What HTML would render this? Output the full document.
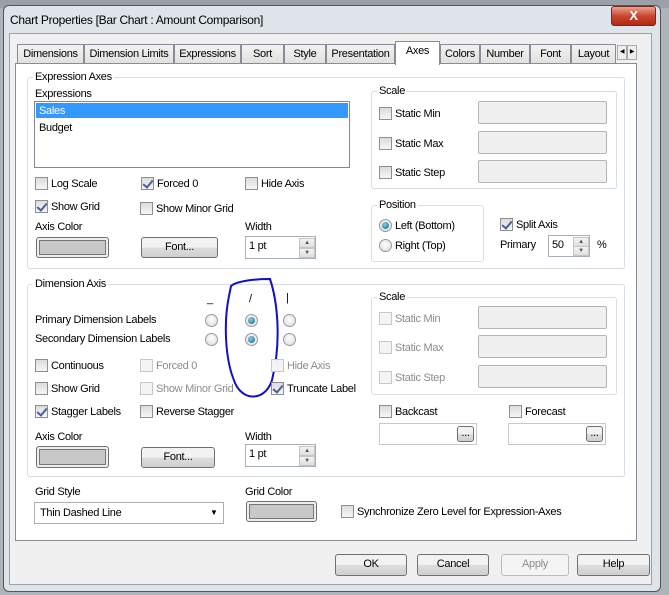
<!DOCTYPE html>
<html><head><meta charset="utf-8"><style>
*{box-sizing:border-box;margin:0;padding:0}
body{width:669px;height:595px;background:#aeb4ba;position:relative;overflow:hidden;font-family:"Liberation Sans",sans-serif;font-size:11px;letter-spacing:-0.3px;color:#000}
.a{position:absolute}
.t{position:absolute;white-space:nowrap;line-height:14px}
.cb{position:absolute;width:13px;height:13px;border:1px solid #8f8f8f;background:linear-gradient(#dcdcdc,#f6f6f6)}
.cb.on::after{content:"";position:absolute;left:3px;top:0px;width:4px;height:8px;border:solid #4a5f97;border-width:0 2px 2px 0;transform:rotate(40deg)}
.cb.dis{border-color:#c8c8c8;background:#f4f4f4}
.rb{position:absolute;width:13px;height:13px;border-radius:50%;border:1px solid #9a9a9a;background:radial-gradient(circle at 50% 40%,#fff,#d9d9d9)}
.rb.on::after{content:"";position:absolute;left:2px;top:2px;width:7px;height:7px;border-radius:50%;background:radial-gradient(circle at 40% 35%,#7fd0e8,#1b5e7e)}
.dis{color:#8d8d8d}
.grp{position:absolute;border:1px solid #d5dfe5;border-radius:3px}
.gl{position:absolute;background:#fff;padding:0 2px;line-height:14px;top:-8px;left:5px;white-space:nowrap}
.btn{position:absolute;border:1px solid #707070;border-radius:3px;background:linear-gradient(#f2f2f2 50%,#dddddd 51%,#cfcfcf);text-align:center;line-height:19px;white-space:nowrap}
.inp{position:absolute;border:1px solid #b5b5b5;background:#f0f0f0;border-radius:2px}
.color{position:absolute;border:1px solid #707070;border-radius:3px;padding:2px;background:#eee}
.color div{width:100%;height:100%;background:#c8c8c8;border:1px solid #777}
.spin{position:absolute;border:1px solid #abadb3;background:#fff}
.spin .s{position:absolute;right:0;width:16px;border:1px solid #c5c5c5;background:linear-gradient(#f4f4f4,#dedede);font-size:6px;text-align:center;color:#555;line-height:8px}
.tab{position:absolute;top:44px;height:20px;border:1px solid #898c95;border-bottom:none;background:linear-gradient(#f2f2f2,#e0e0e0);text-align:center;line-height:18px;white-space:nowrap;overflow:hidden}
</style></head><body>
<div class="a" style="left:0;top:0;width:669px;height:8px;background:#9aa0a8"></div>
<div class="a" style="left:3px;top:5px;width:658px;height:587px;border:1px solid #555;border-radius:6px;background:#dfe4ea"></div>
<div class="t" style="left:10px;top:13px;font-size:12px">Chart Properties [Bar Chart : Amount Comparison]</div>
<div class="a" style="left:611px;top:6px;width:45px;height:20px;border:1px solid #6d2a22;border-radius:3px;background:linear-gradient(#e9a394,#c8452f 50%,#b02a14);color:#fff;font-weight:bold;text-align:center;line-height:18px;font-size:13px">X</div>
<div class="a" style="left:9px;top:33px;width:643px;height:552px;background:#f0f0f0;border:1px solid #9aa3ad"></div>
<div class="tab" style="left:17px;width:67px">Dimensions</div>
<div class="tab" style="left:84px;width:90px">Dimension Limits</div>
<div class="tab" style="left:174px;width:67px">Expressions</div>
<div class="tab" style="left:241px;width:43px">Sort</div>
<div class="tab" style="left:284px;width:42px">Style</div>
<div class="tab" style="left:326px;width:69px">Presentation</div>
<div class="tab" style="left:440px;width:40px">Colors</div>
<div class="tab" style="left:480px;width:50px">Number</div>
<div class="tab" style="left:530px;width:41px">Font</div>
<div class="tab" style="left:571px;width:45px">Layout</div>
<div class="a" style="left:617px;top:45px;width:10px;height:15px;border:1px solid #aaa;background:#eee;font-size:6px;line-height:13px;text-align:center">◀</div>
<div class="a" style="left:627px;top:45px;width:10px;height:15px;border:1px solid #aaa;background:#eee;font-size:6px;line-height:13px;text-align:center">▶</div>
<div class="a" style="left:15px;top:63px;width:622px;height:478px;background:#fff;border:1px solid #898c95"></div>
<div class="tab" style="left:395px;top:41px;width:45px;height:24px;background:#fff;line-height:18px;z-index:2">Axes</div>

<div class="grp" style="left:27px;top:77px;width:598px;height:192px"><span class="gl">Expression Axes</span></div>
<div class="t" style="left:35px;top:87px">Expressions</div>
<div class="a" style="left:34px;top:101px;width:316px;height:67px;border:1px solid #828790;background:#fff"></div>
<div class="a" style="left:36px;top:103px;width:312px;height:15px;background:#3399ff"></div>
<div class="t" style="left:39px;top:104px;color:#fff">Sales</div>
<div class="t" style="left:39px;top:121px">Budget</div>
<div class="cb" style="left:35px;top:177px"></div><div class="t" style="left:51px;top:177px">Log Scale</div>
<div class="cb on" style="left:141px;top:177px"></div><div class="t" style="left:157px;top:177px">Forced 0</div>
<div class="cb" style="left:245px;top:177px"></div><div class="t" style="left:261px;top:177px">Hide Axis</div>
<div class="cb on" style="left:35px;top:200px"></div><div class="t" style="left:51px;top:200px">Show Grid</div>
<div class="cb" style="left:140px;top:202px"></div><div class="t" style="left:156px;top:202px">Show Minor Grid</div>
<div class="t" style="left:35px;top:220px">Axis Color</div>
<div class="color" style="left:36px;top:237px;width:73px;height:21px"><div></div></div>
<div class="btn" style="left:141px;top:237px;width:77px;height:21px">Font...</div>
<div class="t" style="left:245px;top:220px">Width</div>
<div class="spin" style="left:245px;top:236px;width:71px;height:23px"><span class="t" style="left:3px;top:2px">1 pt</span><div class="s" style="top:1px;height:10px">▲</div><div class="s" style="top:11px;height:10px">▼</div></div>

<div class="grp" style="left:371px;top:91px;width:246px;height:98px"><span class="gl">Scale</span></div>
<div class="cb" style="left:379px;top:107px"></div><div class="t" style="left:395px;top:107px">Static Min</div>
<div class="inp" style="left:478px;top:101px;width:129px;height:23px"></div>
<div class="cb" style="left:379px;top:137px"></div><div class="t" style="left:395px;top:137px">Static Max</div>
<div class="inp" style="left:478px;top:131px;width:129px;height:23px"></div>
<div class="cb" style="left:379px;top:166px"></div><div class="t" style="left:395px;top:166px">Static Step</div>
<div class="inp" style="left:478px;top:160px;width:129px;height:23px"></div>
<div class="grp" style="left:371px;top:205px;width:113px;height:57px"><span class="gl">Position</span></div>
<div class="rb on" style="left:379px;top:219px"></div><div class="t" style="left:395px;top:219px">Left (Bottom)</div>
<div class="rb" style="left:379px;top:239px"></div><div class="t" style="left:395px;top:239px">Right (Top)</div>
<div class="cb on" style="left:500px;top:218px"></div><div class="t" style="left:516px;top:218px">Split Axis</div>
<div class="t" style="left:500px;top:238px">Primary</div>
<div class="spin" style="left:548px;top:235px;width:42px;height:22px"><span class="t" style="left:3px;top:2px">50</span><div class="s" style="top:1px;height:10px">▲</div><div class="s" style="top:10px;height:10px">▼</div></div>
<div class="t" style="left:597px;top:238px">%</div>

<div class="grp" style="left:27px;top:284px;width:598px;height:193px"><span class="gl">Dimension Axis</span></div>
<div class="t" style="left:207px;top:292px">_</div>
<div class="t" style="left:249px;top:292px">/</div>
<div class="t" style="left:286px;top:291px">|</div>
<div class="t" style="left:35px;top:313px">Primary Dimension Labels</div>
<div class="t" style="left:35px;top:332px">Secondary Dimension Labels</div>
<div class="rb" style="left:205px;top:314px"></div><div class="rb on" style="left:245px;top:314px"></div><div class="rb" style="left:283px;top:314px"></div>
<div class="rb" style="left:205px;top:333px"></div><div class="rb on" style="left:245px;top:333px"></div><div class="rb" style="left:283px;top:333px"></div>
<svg class="a" style="left:0;top:0" width="669" height="595"><path d="M231 286 C 238 280,260 279,270 279 C 277 300,282 340,272 380 C 266 400,245 402,236 385 C 224 360,224 320,229 296 Z" fill="none" stroke="#1010c8" stroke-width="2"/></svg>
<div class="cb" style="left:35px;top:359px"></div><div class="t" style="left:51px;top:359px">Continuous</div>
<div class="cb dis" style="left:140px;top:359px"></div><div class="t dis" style="left:156px;top:359px">Forced 0</div>
<div class="cb dis" style="left:271px;top:359px"></div><div class="t dis" style="left:287px;top:359px">Hide Axis</div>
<div class="cb" style="left:35px;top:382px"></div><div class="t" style="left:51px;top:382px">Show Grid</div>
<div class="cb dis" style="left:140px;top:382px"></div><div class="t dis" style="left:156px;top:382px">Show Minor Grid</div>
<div class="cb on" style="left:271px;top:382px"></div><div class="t" style="left:287px;top:382px">Truncate Label</div>
<div class="cb on" style="left:35px;top:405px"></div><div class="t" style="left:51px;top:405px">Stagger Labels</div>
<div class="cb" style="left:140px;top:405px"></div><div class="t" style="left:156px;top:405px">Reverse Stagger</div>
<div class="t" style="left:35px;top:430px">Axis Color</div>
<div class="color" style="left:36px;top:446px;width:73px;height:22px"><div></div></div>
<div class="btn" style="left:141px;top:447px;width:74px;height:21px">Font...</div>
<div class="t" style="left:245px;top:430px">Width</div>
<div class="spin" style="left:245px;top:444px;width:71px;height:23px"><span class="t" style="left:3px;top:2px">1 pt</span><div class="s" style="top:1px;height:10px">▲</div><div class="s" style="top:11px;height:10px">▼</div></div>

<div class="grp" style="left:371px;top:297px;width:246px;height:98px"><span class="gl">Scale</span></div>
<div class="cb dis" style="left:379px;top:312px"></div><div class="t dis" style="left:395px;top:312px">Static Min</div>
<div class="inp" style="left:478px;top:306px;width:129px;height:23px"></div>
<div class="cb dis" style="left:379px;top:341px"></div><div class="t dis" style="left:395px;top:341px">Static Max</div>
<div class="inp" style="left:478px;top:335px;width:129px;height:23px"></div>
<div class="cb dis" style="left:379px;top:371px"></div><div class="t dis" style="left:395px;top:371px">Static Step</div>
<div class="inp" style="left:478px;top:365px;width:129px;height:23px"></div>
<div class="cb" style="left:379px;top:405px"></div><div class="t" style="left:395px;top:405px">Backcast</div>
<div class="cb" style="left:509px;top:405px"></div><div class="t" style="left:525px;top:405px">Forecast</div>
<div class="a" style="left:379px;top:423px;width:98px;height:22px;border:1px solid #c9c9c9;background:#fff"></div>
<div class="btn" style="left:457px;top:426px;width:17px;height:16px;line-height:12px">...</div>
<div class="a" style="left:508px;top:423px;width:98px;height:22px;border:1px solid #c9c9c9;background:#fff"></div>
<div class="btn" style="left:586px;top:426px;width:17px;height:16px;line-height:12px">...</div>

<div class="t" style="left:35px;top:485px">Grid Style</div>
<div class="a" style="left:34px;top:502px;width:190px;height:22px;border:1px solid #abadb3;background:#fff"></div>
<div class="t" style="left:40px;top:506px">Thin Dashed Line</div>
<div class="t" style="left:210px;top:506px;font-size:8px">▼</div>
<div class="t" style="left:245px;top:485px">Grid Color</div>
<div class="color" style="left:246px;top:501px;width:71px;height:21px"><div></div></div>
<div class="cb" style="left:341px;top:505px"></div><div class="t" style="left:357px;top:505px">Synchronize Zero Level for Expression-Axes</div>

<div class="btn" style="left:335px;top:554px;width:72px;height:22px">OK</div>
<div class="btn" style="left:417px;top:554px;width:72px;height:22px">Cancel</div>
<div class="btn" style="left:501px;top:554px;width:68px;height:22px;border-color:#bbb;background:#f4f4f4;color:#8d8d8d">Apply</div>
<div class="btn" style="left:577px;top:554px;width:73px;height:22px">Help</div>
</body></html>
